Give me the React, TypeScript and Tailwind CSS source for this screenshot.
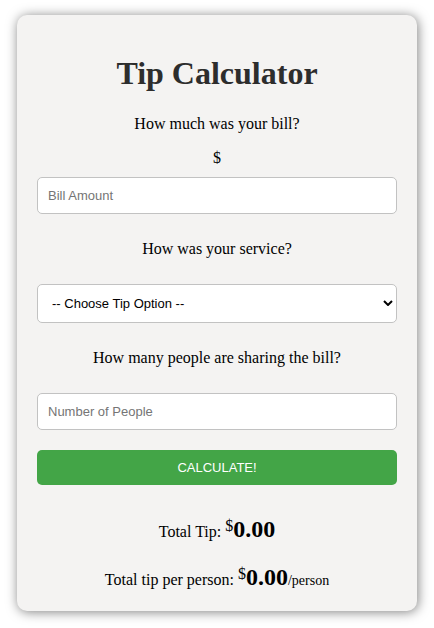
import React, { useState } from "react";

const field =
  "block w-full rounded-[5px] border border-[#c2c2c2] bg-white font-['Liberation_Sans',Arial,sans-serif] text-[13px] leading-[15px] text-black";

export default function App() {
  const [bill, setBill] = useState("");
  const [service, setService] = useState("");
  const [people, setPeople] = useState("");
  const [tip, setTip] = useState(0);
  const [share, setShare] = useState(0);

  function calculate(e: React.FormEvent) {
    e.preventDefault();
    const total = Number(bill) * Number(service);
    setTip(total);
    setShare(total / Math.max(1, Number(people)));
  }

  return (
    <main className="px-4 py-[15px] font-['Liberation_Serif','Times_New_Roman',serif] text-base leading-[18px] text-black">
      <div className="mx-auto max-w-[400px] rounded-[10px] bg-[#f4f3f2] px-5 pt-10 pb-[22px] text-center shadow-[1px_1px_12px_rgba(0,0,0,0.5)]">
        <h1 className="text-[32px] leading-9 font-bold text-[#2d2d2d]">Tip Calculator</h1>
        <form onSubmit={calculate} className="flex flex-col">
          <label htmlFor="bill" className="mt-6">How much was your bill?</label>
          <span className="mt-4">$</span>
          <input
            id="bill"
            inputMode="decimal"
            placeholder="Bill Amount"
            value={bill}
            onChange={(e) => setBill(e.target.value)}
            className={`${field} mt-2.5 p-2.5 placeholder:text-[#757575]`}
          />
          <label htmlFor="service" className="mt-[26px]">How was your service?</label>
          <div className="relative mt-[26px]">
            <select
              id="service"
              value={service}
              onChange={(e) => setService(e.target.value)}
              className={`${field} h-[39px] appearance-none px-[14px]`}
            >
              <option value="">-- Choose Tip Option --</option>
              <option value="0.3">30% - Outstanding</option>
              <option value="0.2">20% - Good</option>
              <option value="0.15">15% - It was OK</option>
              <option value="0.1">10% - Bad</option>
            </select>
            <svg viewBox="0 0 10 6" className="pointer-events-none absolute top-4 right-1 h-1.5 w-2.5" fill="none" stroke="black" strokeWidth="2">
              <path d="M1 1 L5 5 L9 1" />
            </svg>
          </div>
          <label htmlFor="people" className="mt-[26px]">How many people are sharing the bill?</label>
          <input
            id="people"
            inputMode="numeric"
            placeholder="Number of People"
            value={people}
            onChange={(e) => setPeople(e.target.value)}
            className={`${field} mt-[26px] p-2.5 placeholder:text-[#757575]`}
          />
          <button
            type="submit"
            className="mt-5 rounded-[5px] bg-[#43a547] p-2.5 font-['Liberation_Sans',Arial,sans-serif] text-[13px] leading-[15px] text-white"
          >
            CALCULATE!
          </button>
        </form>
        <p className="mt-8">
          Total Tip: <sup className="static align-super text-base leading-none">$</sup>
          <span className="text-2xl leading-6 font-bold">{tip.toFixed(2)}</span>
        </p>
        <p className="mt-6">
          Total tip per person: <sup className="static align-super text-base leading-none">$</sup>
          <span className="text-2xl leading-6 font-bold">{share.toFixed(2)}</span>
          <span className="text-sm leading-none">/person</span>
        </p>
      </div>
    </main>
  );
}
